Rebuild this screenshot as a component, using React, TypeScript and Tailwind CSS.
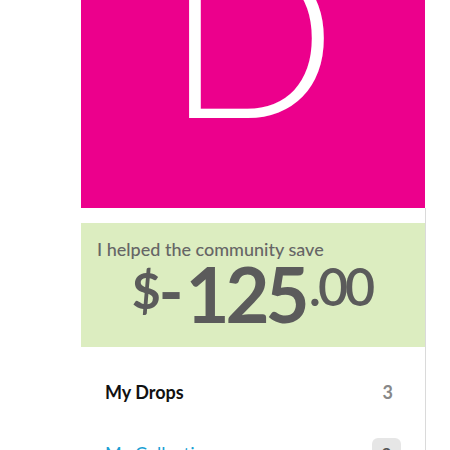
import React from 'react'

export default function App() {
  return (
    <div className="w-[450px] h-[450px] overflow-hidden bg-white font-['Lato','Liberation_Sans',sans-serif]">
      <div className="ml-[81px] w-[345px]">
        {/* avatar */}
        <div className="h-[208px] w-[344px] bg-[#ec008c] overflow-hidden flex justify-center items-end">
          <span className="text-white font-light text-[226px] leading-none mb-[64px] mr-[3px]">D</span>
        </div>

        <div className="border-r border-[#dadada] pt-[15px]">
          {/* savings */}
          <div className="bg-[#dcedc0] h-[124px] w-[344px] px-4 pt-[16px]">
            <p className="text-[18px] leading-5 text-[#666] font-medium">I helped the community save</p>
            <div className="flex justify-center items-start font-bold text-[#5b5b5b] leading-none mt-[-3px] pr-[2px]">
              <span className="text-[50px] mt-[9px]">$</span>
              <span className="text-[66px] mt-[2px] ml-[-2px]">-</span>
              <span className="text-[76px] tracking-[-4px] ml-[2px] mr-[3px]">125</span>
              <span className="text-[52px] mt-[4px] font-semibold tracking-[-3px]">.00</span>
            </div>
          </div>

          {/* nav */}
          <div className="pt-[33px]">
            <div className="flex items-center justify-between pl-6 pr-8 h-[24px]">
              <span className="text-[18px] font-bold text-[#111]">My Drops</span>
              <span className="text-[18px] font-bold text-[#888]">3</span>
            </div>
            <div className="flex items-center justify-between pl-6 pr-6 mt-[37px] h-[24px]">
              <span className="text-[18px] text-[#1a9fd4]">My Collections</span>
              <span className="bg-[#e6e6e6] rounded-md px-[10px] py-[3px] text-[16px] font-bold text-[#555]">2</span>
            </div>
          </div>
        </div>
      </div>
    </div>
  )
}
